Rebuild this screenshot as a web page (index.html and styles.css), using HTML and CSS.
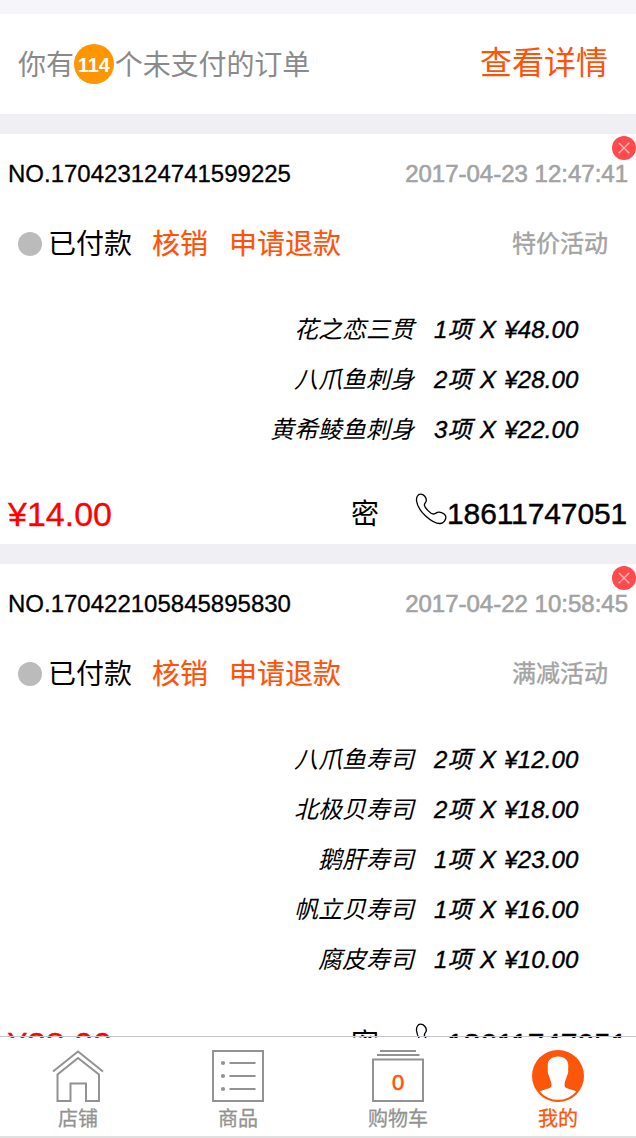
FILE: index.html
```html
<!DOCTYPE html>
<html lang="zh-CN">
<head>
<meta charset="utf-8">
<title>我的订单</title>
<link rel="stylesheet" href="styles.css">
</head>
<body>
<svg class="defs" width="0" height="0">
  <symbol id="phone" viewBox="0 0 32 32"><path d="M1.6 8C1.1 4.400 2.700 1.200 5.500 1.200C9 1.200 11.500 4.600 11.300 7.600C11.100 9.700 9 10.600 9.400 12.300C10.100 15 15.500 20.900 18.200 21C20.500 21 21.500 19 24 19.100C27.500 19.300 31 21.800 30.900 24.400C30.700 27 28.600 30.300 25.500 30.500C21.500 30.800 14.800 26.800 10.600 23C5.800 18.500 2.100 12.600 1.600 8Z" fill="none" stroke="currentColor" stroke-width="1.300"/></symbol>
  <symbol id="close" viewBox="0 0 24 24"><circle cx="12" cy="12" r="12" fill="#ff4b4d"/><path d="M6.700 6.700 17.300 17.300M17.300 6.700 6.700 17.300" stroke="#ffb5b5" stroke-width="1.400" fill="none"/></symbol>
</svg>
<div class="app">
  <main class="scroll">
    <section class="notice">
      <p class="notice-text"><span class="han">你有</span><span class="count">114</span><span class="han">个未支付的订单</span></p>
      <a class="detail">查看详情</a>
    </section>

    <article class="order">
      <svg class="close"><use href="#close"/></svg>
      <header class="order-head"><span>NO.170423124741599225</span><time>2017-04-23 12:47:41</time></header>
      <div class="status"><i class="dot"></i><span class="paid">已付款</span><a class="verify">核销</a><a>申请退款</a><span class="promo">特价活动</span></div>
      <ul class="items">
        <li><span>花之恋三贯</span><span class="qty">1项 X ¥48.00</span></li>
        <li><span>八爪鱼刺身</span><span class="qty">2项 X ¥28.00</span></li>
        <li><span>黄希鲮鱼刺身</span><span class="qty">3项 X ¥22.00</span></li>
      </ul>
      <footer class="order-foot"><span class="total">¥14.00</span><span class="secret">密</span><svg class="phone"><use href="#phone"/></svg><span class="number">18611747051</span></footer>
    </article>

    <article class="order">
      <svg class="close"><use href="#close"/></svg>
      <header class="order-head"><span>NO.170422105845895830</span><time>2017-04-22 10:58:45</time></header>
      <div class="status"><i class="dot"></i><span class="paid">已付款</span><a class="verify">核销</a><a>申请退款</a><span class="promo">满减活动</span></div>
      <ul class="items">
        <li><span>八爪鱼寿司</span><span class="qty">2项 X ¥12.00</span></li>
        <li><span>北极贝寿司</span><span class="qty">2项 X ¥18.00</span></li>
        <li><span>鹅肝寿司</span><span class="qty">1项 X ¥23.00</span></li>
        <li><span>帆立贝寿司</span><span class="qty">1项 X ¥16.00</span></li>
        <li><span>腐皮寿司</span><span class="qty">1项 X ¥10.00</span></li>
      </ul>
      <footer class="order-foot"><span class="total">¥28.00</span><span class="secret">密</span><svg class="phone"><use href="#phone"/></svg><span class="number">18611747051</span></footer>
    </article>
  </main>

  <nav class="tabs">
    <a class="tab">
      <svg class="tab-icon" viewBox="0 0 52 52"><g fill="none" stroke="currentColor" stroke-width="2"><path d="M1 21.500 26 1.500 51 21.500"/><path d="M5.500 51V24.500L26 8 47 24.500V51H34V33.500H18.500V51Z"/></g></svg>
      <span>店铺</span>
    </a>
    <a class="tab">
      <svg class="tab-icon" viewBox="0 0 52 52"><rect x="1" y="1" width="50" height="50" fill="none" stroke="currentColor" stroke-width="2"/><path d="M17.500 13H43.500M17.500 26H43.500M17.500 39H43.500" stroke="currentColor" stroke-width="2"/><g fill="currentColor"><circle cx="11" cy="13" r="2.100"/><circle cx="11" cy="26" r="2.100"/><circle cx="11" cy="39" r="2.100"/></g></svg>
      <span>商品</span>
    </a>
    <a class="tab">
      <svg class="tab-icon" viewBox="0 0 52 52"><path d="M8 1H44M5 5H47.500" stroke="currentColor" stroke-width="2"/><rect x="1" y="9.500" width="50" height="41.500" fill="none" stroke="currentColor" stroke-width="2"/></svg>
      <b class="cart-count">0</b>
      <span>购物车</span>
    </a>
    <a class="tab active">
      <svg class="tab-icon" viewBox="0 0 52 52"><circle cx="26" cy="26" r="26" fill="currentColor"/><path d="M26 6.500C33 6.500 36.300 10.500 36.300 15.500C36.300 17.500 36 19 36.200 20.500C36.400 22.500 35.700 24.500 34.900 26C34.200 29 32.900 31 32.700 33C32.500 35.500 32.300 37 34.500 38C38 39.500 41.500 40 44.300 41.500A24.300 24.300 0 0 1 7.700 41.500C10.500 40 14 39.500 17.500 38C19.700 37 19.700 35.500 19.300 33C19 31 17.800 29 17.100 26C16.300 24.500 15.600 22.500 15.800 20.500C16 19 15.700 17.500 15.700 15.500C15.700 10.500 19 6.500 26 6.500Z" fill="#fff"/></svg>
      <span>我的</span>
    </a>
  </nav>
</div>
</body>
</html>
```
FILE: styles.css
```css
* { box-sizing: border-box; }

body {
  margin: 0;
  background: #efeff4;
  color: #000;
  font-family: "Liberation Sans", "Noto Sans CJK SC", sans-serif;
}

.defs { position: absolute; }

.app {
  display: flex;
  flex-direction: column;
  width: 636px;
  height: 1138px;
  overflow: hidden;
}

.scroll {
  flex: none;
  display: flex;
  flex-direction: column;
  gap: 20px;
  height: 1038px;
  overflow: hidden;
  border-top: 14px solid #f5f5fa;
}

.notice {
  flex: none;
  display: flex;
  align-items: center;
  justify-content: space-between;
  height: 100px;
  padding: 0 28px 0 18px;
  background: #fff;
}

.notice-text {
  display: flex;
  align-items: center;
  margin: 0;
  color: #8a8a8a;
  font-size: 28px;
  line-height: 40px;
}

.han { padding-top: 3px; letter-spacing: -0.1px; }

.count {
  width: 40px;
  height: 40px;
  margin-right: 1px;
  border-radius: 50%;
  background: #ff9500;
  color: #fff;
  font-size: 20px;
  font-weight: bold;
  line-height: 42px;
  text-align: center;
}

.detail { color: #ff5208; font-size: 32px; line-height: 40px; margin-top: -2px; }

.order {
  position: relative;
  flex: none;
  background: #fff;
}

.close {
  position: absolute;
  top: 2px;
  right: 0;
  width: 24px;
  height: 24px;
}

.order-head {
  display: flex;
  justify-content: space-between;
  height: 80px;
  padding: 0 8px;
  font-size: 24px;
  line-height: 80px;
  -webkit-text-stroke: 0.3px;
}

.order-head time { color: #a3a3a3; -webkit-text-stroke: 0.6px; }

.status {
  display: flex;
  align-items: center;
  height: 60px;
  padding: 0 28px 0 18px;
  font-size: 28px;
  line-height: 60px;
}

.status a, .paid { padding-top: 2px; }
.status a { color: #ff5208; -webkit-text-stroke: 0.2px; }
.dot { width: 24px; height: 24px; border-radius: 50%; background: #bbb; }
.paid { margin: 0 20px 0 6px; }
.verify { margin-right: 21px; }
.promo { margin-left: auto; color: #a3a3a3; font-size: 24px; -webkit-text-stroke: 0.4px; }

.items {
  margin: 0;
  padding: 31px 55px 29px 0;
  list-style: none;
  font-size: 24px;
  font-style: italic;
  line-height: 50px;
}

.items li { display: flex; justify-content: flex-end; gap: 20px; height: 50px; }
.qty { width: 147px; white-space: nowrap; word-spacing: 1.6px; letter-spacing: 0.1px; -webkit-text-stroke: 0.4px; }

.order-foot {
  display: flex;
  align-items: center;
  height: 60px;
  padding: 0 6px 0 8px;
  line-height: 60px;
}

.total { width: 343px; color: #f00; font-size: 34px; -webkit-text-stroke: 0.3px; }
.secret { width: 64px; padding-top: 2px; font-size: 28px; }
.phone { flex: none; width: 32px; height: 32px; margin-bottom: 10px; }
.number { font-size: 30px; letter-spacing: -0.1px; -webkit-text-stroke: 0.4px; }

.tabs {
  position: relative;
  flex: none;
  display: grid;
  grid-template-columns: repeat(4, 160px);
  height: 102px;
  margin-top: -2px;
  margin-left: -2px;
  border-top: 1px solid #c4c4ca;
  border-bottom: 2px solid #e0e0e0;
  background: linear-gradient(transparent 1px, #fff 1px);
}

.tab {
  position: relative;
  display: flex;
  flex-direction: column;
  align-items: center;
  padding-top: 13px;
  color: #929292;
  font-size: 20px;
  line-height: 34px;
  -webkit-text-stroke: 0.3px;
}

.tab-icon { flex: none; width: 52px; height: 52px; }
.active { color: #fb560a; }

.cart-count {
  position: absolute;
  top: 29px;
  color: #fb560a;
  font-size: 22px;
  font-weight: normal;
  -webkit-text-stroke: 0.6px;
}
```
